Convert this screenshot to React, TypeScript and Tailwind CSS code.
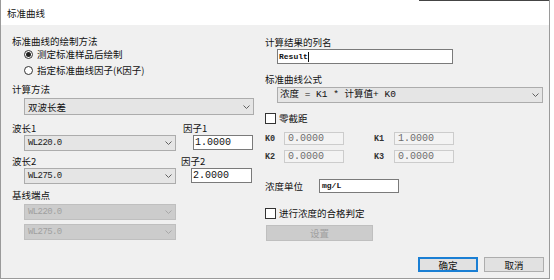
import React from "react";

const cjk = "font-['Noto_Sans_CJK_SC',sans-serif]";
const mono = "font-['Liberation_Mono','Noto_Sans_CJK_SC',monospace]";

function Chevron({ color }: { color: string }) {
  return (
    <svg width="7" height="4" viewBox="0 0 7 4">
      <polyline points="0.5,0.5 3.5,3.5 6.5,0.5" fill="none" stroke={color} strokeWidth="1" />
    </svg>
  );
}

function Label({ children, className = "" }: { children: React.ReactNode; className?: string }) {
  return (
    <div className={`h-[12px] leading-[12px] text-[9.5px] text-[#111] whitespace-nowrap ${cjk} ${className}`}>
      {children}
    </div>
  );
}

function Radio({ checked, children }: { checked?: boolean; children: React.ReactNode }) {
  return (
    <div className="flex items-center h-[12px] pl-[23px] gap-[4px]">
      <div className="w-[9px] h-[9px] rounded-full border border-[#333] bg-white flex items-center justify-center">
        {checked && <div className="w-[5px] h-[5px] rounded-full bg-[#222]" />}
      </div>
      <span className={`text-[9.5px] leading-[12px] text-[#111] whitespace-nowrap ${cjk}`}>{children}</span>
    </div>
  );
}

function Checkbox({ children }: { children: React.ReactNode }) {
  return (
    <div className="flex items-center h-[12px] gap-[3px]">
      <div className="w-[11px] h-[11px] border border-[#333] bg-white" />
      <span className={`text-[9.5px] leading-[12px] text-[#111] whitespace-nowrap ${cjk}`}>{children}</span>
    </div>
  );
}

export default function App() {
  return (
    <div className="w-[554px] h-[280px] bg-white overflow-hidden">
      <div className="w-[550px] h-[279px] border-l border-r border-b border-[#9a9a9a] flex flex-col">
        {/* title bar */}
        <div className="h-[25px] bg-white flex flex-col">
          <div className="flex h-[1px]">
            <div className="flex-1" />
            <div className="w-[130px] bg-[#444]" />
          </div>
          <div className={`flex-1 flex items-center pl-[6px] text-[9.5px] text-[#111] ${cjk}`}>标准曲线</div>
        </div>
        {/* body */}
        <div className="flex-1 bg-[#f0f0f0] flex">
          {/* left column */}
          <div className="w-[264px] pt-[10px] flex flex-col">
            <Label className="pl-[11px]">标准曲线的绘制方法</Label>
            <div className="mt-[1px]">
              <Radio checked>测定标准样品后绘制</Radio>
            </div>
            <div className="mt-[4px]">
              <Radio>指定标准曲线因子(K因子)</Radio>
            </div>
            <Label className="pl-[11px] mt-[7px]">计算方法</Label>
            <div className="mt-[3px] ml-[23px] w-[230px] h-[17px] bg-[#e5e5e5] border border-[#acacac] flex items-center justify-between pl-[3px] pr-[3px]">
              <span className={`text-[9.5px] leading-[12px] text-[#111] ${cjk}`}>双波长差</span>
              <Chevron color="#606060" />
            </div>
            {/* wavelength 1 */}
            <div className="mt-[7px] flex">
              <Label className="pl-[11px] w-[182px]">波长1</Label>
              <Label>因子1</Label>
            </div>
            <div className="mt-[1px] flex items-start">
              <div className="ml-[23px] w-[152px] h-[16px] bg-[#e5e5e5] border border-[#acacac] flex items-center justify-between pl-[3px] pr-[3px]">
                <span className={`text-[9px] tracking-[-0.6px] leading-[12px] text-[#222] ${mono}`}>WL220.0</span>
                <Chevron color="#606060" />
              </div>
              <div className="ml-[17px] w-[60px] h-[15px] bg-white border border-[#7a7a7a] flex items-center pl-[1px]">
                <span className={`text-[10px] leading-[12px] text-[#111] ${mono}`}>1.0000</span>
              </div>
            </div>
            {/* wavelength 2 */}
            <div className="mt-[4px] flex">
              <Label className="pl-[11px] w-[180px]">波长2</Label>
              <Label>因子2</Label>
            </div>
            <div className="mt-[1px] flex items-start">
              <div className="ml-[23px] w-[152px] h-[16px] bg-[#e5e5e5] border border-[#acacac] flex items-center justify-between pl-[3px] pr-[3px]">
                <span className={`text-[9px] tracking-[-0.6px] leading-[12px] text-[#222] ${mono}`}>WL275.0</span>
                <Chevron color="#606060" />
              </div>
              <div className="ml-[15px] w-[61px] h-[15px] bg-white border border-[#7a7a7a] flex items-center pl-[1px]">
                <span className={`text-[10px] leading-[12px] text-[#111] ${mono}`}>2.0000</span>
              </div>
            </div>
            <Label className="pl-[11px] mt-[5px]">基线端点</Label>
            <div className="mt-[3px] ml-[23px] w-[152px] h-[16px] bg-[#cccccc] border border-[#bfbfbf] flex items-center justify-between pl-[3px] pr-[3px]">
              <span className={`text-[9px] tracking-[-0.6px] leading-[12px] text-[#a0a0a0] ${mono}`}>WL220.0</span>
              <Chevron color="#a8a8a8" />
            </div>
            <div className="mt-[4px] ml-[23px] w-[152px] h-[16px] bg-[#cccccc] border border-[#bfbfbf] flex items-center justify-between pl-[3px] pr-[3px]">
              <span className={`text-[9px] tracking-[-0.6px] leading-[12px] text-[#a0a0a0] ${mono}`}>WL275.0</span>
              <Chevron color="#a8a8a8" />
            </div>
          </div>
          {/* right column */}
          <div className="flex-1 pt-[11px] flex flex-col">
            <Label>计算结果的列名</Label>
            <div className="mt-[1px] ml-[12px] w-[176px] h-[15px] bg-white border border-[#7a7a7a] flex items-center pl-[1px]">
              <span className={`text-[8px] leading-[12px] font-bold text-[#111] ${mono}`}>Result</span>
              <div className="w-[1px] h-[10px] bg-[#111]" />
            </div>
            <Label className="mt-[9px]">标准曲线公式</Label>
            <div className="mt-[2px] ml-[12px] w-[266px] h-[16px] bg-[#e5e5e5] border border-[#acacac] flex items-center justify-between pl-[2px] pr-[3px]">
              <span className={`text-[9.5px] leading-[12px] text-[#111] whitespace-pre ${mono}`}>浓度 = K1 * 计算值+ K0</span>
              <Chevron color="#606060" />
            </div>
            <div className="mt-[9px]">
              <Checkbox>零截距</Checkbox>
            </div>
            <div className="mt-[8px] flex items-center h-[13px]">
              <span className={`w-[19px] text-[8.5px] leading-[12px] font-bold text-[#333] ${mono}`}>K0</span>
              <div className="w-[60px] h-[13px] bg-[#f3f3f3] border border-[#cccccc] flex items-center pl-[3px]">
                <span className={`text-[10px] leading-[12px] text-[#6d6d6d] ${mono}`}>0.0000</span>
              </div>
              <span className={`ml-[30px] w-[20px] text-[8.5px] leading-[12px] font-bold text-[#333] ${mono}`}>K1</span>
              <div className="w-[60px] h-[13px] bg-[#f3f3f3] border border-[#cccccc] flex items-center pl-[3px]">
                <span className={`text-[10px] leading-[12px] text-[#6d6d6d] ${mono}`}>1.0000</span>
              </div>
            </div>
            <div className="mt-[5px] flex items-center h-[13px]">
              <span className={`w-[19px] text-[8.5px] leading-[12px] font-bold text-[#333] ${mono}`}>K2</span>
              <div className="w-[60px] h-[13px] bg-[#f3f3f3] border border-[#cccccc] flex items-center pl-[3px]">
                <span className={`text-[10px] leading-[12px] text-[#6d6d6d] ${mono}`}>0.0000</span>
              </div>
              <span className={`ml-[30px] w-[20px] text-[8.5px] leading-[12px] font-bold text-[#333] ${mono}`}>K3</span>
              <div className="w-[60px] h-[13px] bg-[#f3f3f3] border border-[#cccccc] flex items-center pl-[3px]">
                <span className={`text-[10px] leading-[12px] text-[#6d6d6d] ${mono}`}>0.0000</span>
              </div>
            </div>
            <div className="mt-[16px] flex items-center h-[14px]">
              <span className={`w-[54px] text-[9.5px] leading-[12px] text-[#111] ${cjk}`}>浓度单位</span>
              <div className="w-[80px] h-[14px] bg-white border border-[#7a7a7a] flex items-center pl-[2px]">
                <span className={`text-[8px] leading-[12px] font-bold text-[#111] ${mono}`}>mg/L</span>
              </div>
            </div>
            <div className="mt-[14px]">
              <Checkbox>进行浓度的合格判定</Checkbox>
            </div>
            <div className={`mt-[6px] ml-[1px] w-[107px] h-[16px] bg-[#cccccc] border border-[#bfbfbf] flex items-center justify-center text-[9.5px] leading-[12px] text-[#a0a0a0] ${cjk}`}>
              设置
            </div>
            <div className="mt-[16px] flex justify-end pr-[5px] gap-[6px]">
              <div className={`w-[60px] h-[15px] bg-[#e1e1e1] border-2 border-[#1a7fd4] flex items-center justify-center text-[9.5px] leading-[12px] text-[#111] ${cjk}`}>
                确定
              </div>
              <div className={`w-[60px] h-[15px] bg-[#e1e1e1] border border-[#adadad] flex items-center justify-center text-[9.5px] leading-[12px] text-[#111] ${cjk}`}>
                取消
              </div>
            </div>
          </div>
        </div>
      </div>
    </div>
  );
}
